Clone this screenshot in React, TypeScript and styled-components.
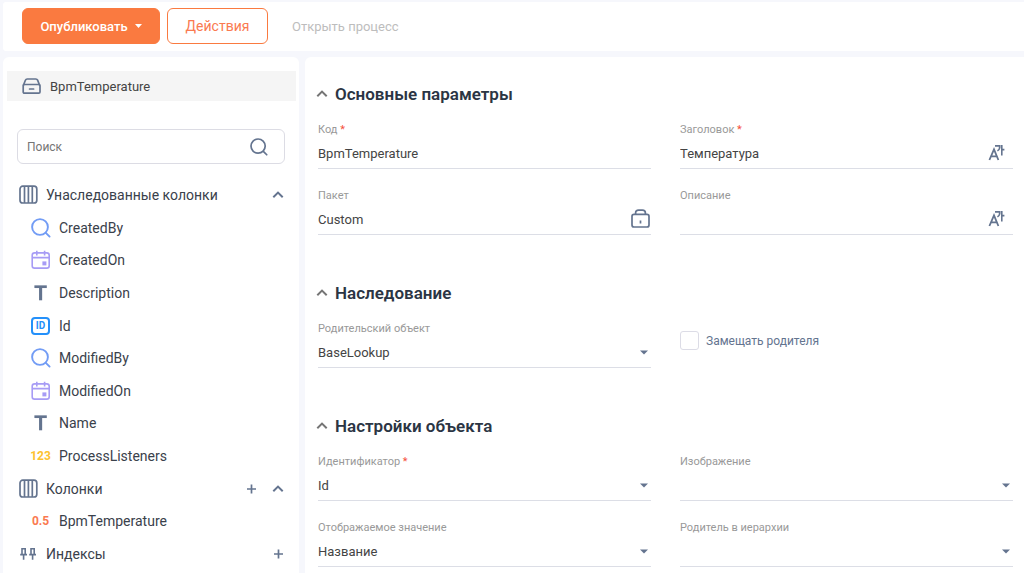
import React from 'react';
import styled, { createGlobalStyle } from 'styled-components';

const GlobalStyle = createGlobalStyle`
  * { box-sizing: border-box; }
  body {
    margin: 0;
    background: #f6f7fc;
    font-family: Roboto, "Liberation Sans", sans-serif;
    color: #444;
  }
  button, input, select { font: inherit; color: inherit; }
`;

const Page = styled.div`
  display: flex;
  flex-direction: column;
  gap: 6px;
  height: 100vh;
  padding: 2px 0 0 3px;
  overflow: hidden;
`;

const Toolbar = styled.header`
  display: flex;
  flex: none;
  align-items: center;
  gap: 7px;
  padding: 6px 19px 7px;
  background: #fff;
  border-radius: 3px 0 0 3px;
`;

const ActionButton = styled.button<{ $primary?: boolean }>`
  display: flex;
  align-items: center;
  justify-content: center;
  gap: 7px;
  height: 36px;
  padding: 0 17px;
  min-width: ${p => (p.$primary ? 138 : 101)}px;
  border: 1px solid #fa7a40;
  border-radius: 6px;
  background: ${p => (p.$primary ? '#fa7a40' : '#fff')};
  color: ${p => (p.$primary ? '#fff' : '#fa7a50')};
  font-size: ${p => (p.$primary ? 13 : 14)}px;
  font-weight: ${p => (p.$primary ? 500 : 400)};
`;

const GhostButton = styled.button`
  height: 36px;
  padding: 0 17px;
  border: 0;
  background: none;
  font-size: 13px;
  &:disabled { color: #bdbdbd; }
`;

const Workspace = styled.div`
  display: flex;
  flex: 1;
  gap: 6px;
  min-height: 0;
`;

const Sidebar = styled.aside`
  flex: none;
  width: 296px;
  padding: 14px 3px 0 4px;
  background: #fff;
  border-radius: 6px 6px 0 0;
`;

const Current = styled.div`
  display: flex;
  align-items: center;
  gap: 8px;
  height: 30px;
  padding: 0 15px;
  background: #f5f5f5;
  font-size: 13px;
`;

const SearchBox = styled.label`
  display: flex;
  align-items: center;
  height: 35px;
  margin: 28px 11px 15px 10px;
  padding: 0 16px 0 9px;
  border: 1px solid #dcdce4;
  border-radius: 6px;
`;

const SearchInput = styled.input`
  flex: 1;
  min-width: 0;
  padding: 0;
  border: 0;
  outline: 0;
  background: none;
  font-size: 12px;
  &::placeholder { color: #757575; opacity: 1; }
`;

const Tree = styled.ul`
  display: grid;
  grid-auto-rows: 1fr;
  height: 391px;
  margin: 0;
  padding: 0 10px 0 12px;
  list-style: none;
`;

const TreeRow = styled.li<{ $nested?: boolean }>`
  display: flex;
  align-items: center;
  gap: ${p => (p.$nested ? 8 : 7)}px;
  padding-left: ${p => (p.$nested ? 12 : 0)}px;
  color: #3a414b;
  font-size: 14px;
`;

const TreeLabel = styled.span`
  flex: 1;
`;

const IconButton = styled.button`
  display: flex;
  padding: 0;
  border: 0;
  background: none;
`;

const RowActions = styled.span`
  display: flex;
  gap: 11px;
`;

const Main = styled.main`
  flex: 1;
  min-width: 0;
  padding: 19px 11px 0 13px;
  background: #fff;
  border-radius: 6px 0 0 0;
`;

const Section = styled.section`
  margin-bottom: 40px;
`;

const SectionTitle = styled.h2`
  display: flex;
  align-items: center;
  gap: 7px;
  height: 36px;
  margin: 0 0 8px -2px;
  color: #2b3544;
  font-size: 17px;
  font-weight: 600;
`;

const Fields = styled.div`
  display: grid;
  grid-template-columns: 1fr 1fr;
  gap: 17px 29px;
`;

const Field = styled.label`
  display: block;
`;

const FieldName = styled.span`
  display: block;
  height: 18px;
  color: #999;
  font-size: 11px;
  line-height: 20px;
`;

const Required = styled.span`
  color: #f5503c;
`;

const Control = styled.span`
  display: flex;
  align-items: center;
  height: 31px;
  border-bottom: 1px solid #dcdee6;
`;

const TextInput = styled.input`
  flex: 1;
  min-width: 0;
  padding: 0;
  border: 0;
  outline: 0;
  background: none;
  font-size: 13px;
`;

const Select = styled.select`
  flex: 1;
  align-self: stretch;
  min-width: 0;
  padding: 0 16px 0 0;
  border: 0;
  outline: 0;
  appearance: none;
  font-size: 13px;
  background: url("data:image/svg+xml,%3Csvg xmlns='http://www.w3.org/2000/svg' width='8' height='5'%3E%3Cpath d='M0 0.5h8L4 4.5z' fill='%2364748f'/%3E%3C/svg%3E") no-repeat right 3px bottom 12px;
`;

const CheckLabel = styled.label`
  display: flex;
  align-items: center;
  align-self: center;
  gap: 7px;
  height: 20px;
  margin-bottom: 6px;
  color: #64748f;
  font-size: 12px;
`;

const CheckBox = styled.input`
  width: 19px;
  height: 19px;
  margin: 0;
  appearance: none;
  border: 1px solid #dcdce6;
  border-radius: 3px;
`;

const slate = '#64748f';

const Chevron = ({ color = slate }: { color?: string }) => (
  <svg width="12" height="12" viewBox="0 0 12 12" fill="none" stroke={color} strokeWidth="2">
    <path d="M1.3 8.3 6 3.6l4.7 4.7" />
  </svg>
);

const Plus = () => (
  <svg width="16" height="16" viewBox="0 0 16 16" stroke={slate} strokeWidth="1.7">
    <path d="M8.5 3.5v9M4 8h9" />
  </svg>
);

const Magnifier = ({ color = slate, size = 19 }: { color?: string; size?: number }) => (
  <svg width={size} height={size} viewBox="0 0 20 20" fill="none" stroke={color} strokeWidth="1.9" strokeLinecap="round">
    <circle cx="9" cy="9" r="7.9" />
    <path d="m14.8 14.8 3.8 3.8" />
  </svg>
);

const Drawer = () => (
  <svg width="20" height="18" viewBox="0 0 20 18" fill="none" stroke={slate} strokeWidth="1.7" strokeLinejoin="round" strokeLinecap="round">
    <path d="M1.5 8 3.4 3.2q.5-1.2 1.8-1.2h8.6q1.3 0 1.8 1.2L17.5 8" />
    <rect x="1.2" y="7.5" width="16.8" height="8.7" rx="1.2" />
    <path d="M7.6 12h4" />
  </svg>
);

const ColumnsIcon = () => (
  <svg width="20" height="20" viewBox="0 0 20 20" fill="none" stroke={slate} strokeWidth="1.7">
    <rect x="1" y="1.2" width="16.8" height="16.8" rx="2.8" />
    <path d="M5.5 1.2v16.8M9.4 1.2v16.8M13.3 1.2v16.8" />
  </svg>
);

const CalendarIcon = () => (
  <svg width="20" height="20" viewBox="0 0 20 20" fill="none" stroke="#a79cf5" strokeWidth="1.6">
    <rect x="1.2" y="2.9" width="17" height="15.2" rx="2.4" />
    <path d="M1.2 7.6h17M5.8 .8v4.6M13.6 .8v4.6" />
    <rect x="11.4" y="11.4" width="4" height="4" fill="#a79cf5" stroke="none" />
  </svg>
);

const TypeIcon = () => (
  <svg width="20" height="20" viewBox="0 0 20 20" fill="none" stroke={slate}>
    <path d="M3.4 3.7h12.4" strokeWidth="2.7" />
    <path d="M9.6 3.7v13.6" strokeWidth="3.1" />
  </svg>
);

const PinsIcon = () => (
  <svg width="20" height="20" viewBox="0 0 20 20" fill="none" stroke={slate} strokeWidth="1.6">
    <path d="M2.2 4.8h4.8M3 4.8v5.5M6.2 4.8v5.5M1.2 10.6h6.8M4.6 10.6v5.2M11.2 4.8h4.8M12 4.8v5.5M15.2 4.8v5.5M10.2 10.6h6.8M13.6 10.6v5.2" />
  </svg>
);

const LockIcon = () => (
  <svg width="21" height="21" viewBox="0 0 21 21" fill="none" stroke={slate} strokeWidth="1.7">
    <rect x="2" y="5.4" width="17" height="12.6" rx="2" />
    <path d="M5.6 5.4V4Q5.6 1.1 8.6 1.1h3.8q3 0 3 2.9v1.4M10.5 11.4v3" />
  </svg>
);

const TranslateIcon = () => (
  <svg width="17" height="19" viewBox="0 0 17 19" fill="none" stroke={slate} strokeWidth="1.8">
    <path d="M1.4 16 6 5.4 10.4 16M3 12.4h6" />
    <path d="M7 1.9h4.8q.2 3.6-2.4 5M13.8 .9v10.7M13.8 5.6h2.6" strokeWidth="1.6" />
  </svg>
);

const Glyph = styled.span<{ $color: string; $boxed?: boolean }>`
  display: flex;
  align-items: center;
  justify-content: center;
  width: 19px;
  height: 18px;
  margin-right: 1px;
  color: ${p => p.$color};
  font-size: ${p => (p.$boxed ? 10 : 12)}px;
  font-weight: 700;
  white-space: nowrap;
  ${p => p.$boxed && `border: 2px solid ${p.$color}; border-radius: 4px;`}
`;

type Item = { name: string; icon: React.ReactNode };

const lookup = <Magnifier color="#729cf5" size={20} />;

const inherited: Item[] = [
  { name: 'CreatedBy', icon: lookup },
  { name: 'CreatedOn', icon: <CalendarIcon /> },
  { name: 'Description', icon: <TypeIcon /> },
  { name: 'Id', icon: <Glyph $color="#2490fa" $boxed>ID</Glyph> },
  { name: 'ModifiedBy', icon: lookup },
  { name: 'ModifiedOn', icon: <CalendarIcon /> },
  { name: 'Name', icon: <TypeIcon /> },
  { name: 'ProcessListeners', icon: <Glyph $color="#fdc22f">123</Glyph> },
];

const FoldButton = styled(IconButton)`
  align-items: center;
  justify-content: center;
  width: 16px;
  height: 16px;
`;

const Group = ({ name, icon, add, fold }: Item & { add?: boolean; fold?: boolean }) => (
  <TreeRow>
    {icon}
    <TreeLabel>{name}</TreeLabel>
    <RowActions>
      {add && <IconButton aria-label="Добавить"><Plus /></IconButton>}
      {fold && <FoldButton aria-label="Свернуть"><Chevron /></FoldButton>}
    </RowActions>
  </TreeRow>
);

const Leaf = ({ name, icon }: Item) => (
  <TreeRow $nested>
    {icon}
    <TreeLabel>{name}</TreeLabel>
  </TreeRow>
);

type FieldProps = { name: string; value?: string; required?: boolean };

const Name = ({ name, required }: FieldProps) => (
  <FieldName>{name}{required && <Required> *</Required>}</FieldName>
);

const FieldIcon = styled.span<{ $inset?: boolean }>`
  display: flex;
  margin-right: ${p => (p.$inset ? 8 : 0)}px;
`;

const TextField = ({ icon, inset, ...field }: FieldProps & { icon?: React.ReactNode; inset?: boolean }) => (
  <Field>
    <Name {...field} />
    <Control>
      <TextInput defaultValue={field.value} />
      {icon && <FieldIcon $inset={inset}>{icon}</FieldIcon>}
    </Control>
  </Field>
);

const SelectField = (field: FieldProps) => (
  <Field>
    <Name {...field} />
    <Control>
      <Select><option>{field.value}</option></Select>
    </Control>
  </Field>
);

const Title = ({ children }: { children: React.ReactNode }) => (
  <SectionTitle>
    <IconButton aria-label="Свернуть раздел"><Chevron color="#757575" /></IconButton>
    {children}
  </SectionTitle>
);

export default function App() {
  return (
    <Page>
      <GlobalStyle />
      <Toolbar>
        <ActionButton $primary>
          Опубликовать
          <svg width="7" height="4" viewBox="0 0 7 4"><path d="M0 0h7L3.5 4z" fill="#fff" /></svg>
        </ActionButton>
        <ActionButton>Действия</ActionButton>
        <GhostButton disabled>Открыть процесс</GhostButton>
      </Toolbar>
      <Workspace>
        <Sidebar>
          <Current><Drawer />BpmTemperature</Current>
          <SearchBox>
            <SearchInput placeholder="Поиск" aria-label="Поиск" />
            <Magnifier size={18} />
          </SearchBox>
          <Tree>
            <Group name="Унаследованные колонки" icon={<ColumnsIcon />} fold />
            {inherited.map(item => <Leaf key={item.name} {...item} />)}
            <Group name="Колонки" icon={<ColumnsIcon />} add fold />
            <Leaf name="BpmTemperature" icon={<Glyph $color="#fa7a50">0.5</Glyph>} />
            <Group name="Индексы" icon={<PinsIcon />} add />
          </Tree>
        </Sidebar>
        <Main>
          <Section>
            <Title>Основные параметры</Title>
            <Fields>
              <TextField name="Код" value="BpmTemperature" required />
              <TextField name="Заголовок" value="Температура" required icon={<TranslateIcon />} inset />
              <TextField name="Пакет" value="Custom" icon={<LockIcon />} />
              <TextField name="Описание" icon={<TranslateIcon />} inset />
            </Fields>
          </Section>
          <Section>
            <Title>Наследование</Title>
            <Fields>
              <SelectField name="Родительский объект" value="BaseLookup" />
              <CheckLabel><CheckBox type="checkbox" />Замещать родителя</CheckLabel>
            </Fields>
          </Section>
          <Section>
            <Title>Настройки объекта</Title>
            <Fields>
              <SelectField name="Идентификатор" value="Id" required />
              <SelectField name="Изображение" />
              <SelectField name="Отображаемое значение" value="Название" />
              <SelectField name="Родитель в иерархии" />
            </Fields>
          </Section>
        </Main>
      </Workspace>
    </Page>
  );
}
